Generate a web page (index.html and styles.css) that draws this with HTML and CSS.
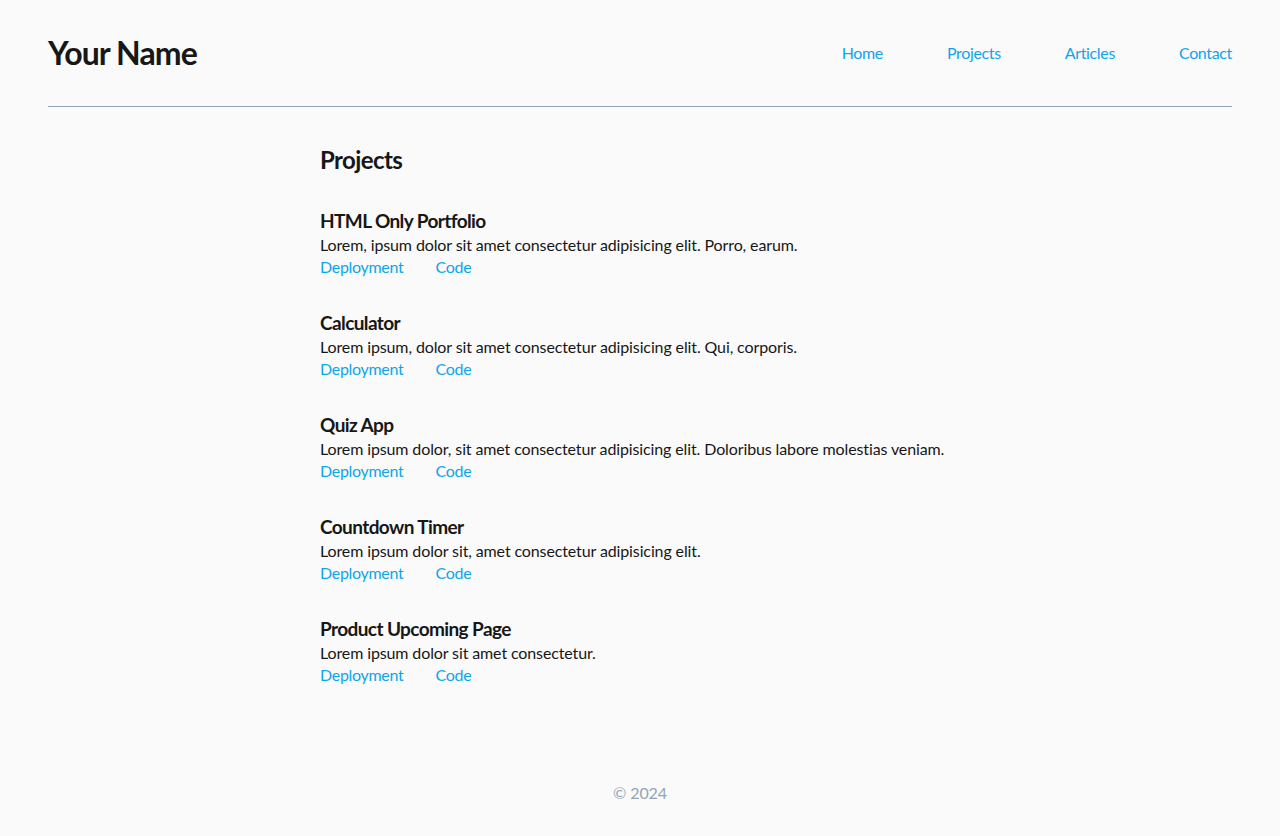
FILE: index.html
```html
<!DOCTYPE html>
<html lang="en">
<head>
<meta charset="utf-8">
<title>Your Name</title>
<link rel="stylesheet" href="styles.css">
</head>
<body>
<header class="site-header">
  <h1 class="logo">Your Name</h1>
  <nav class="nav">
    <a href="#">Home</a>
    <a href="#">Projects</a>
    <a href="#">Articles</a>
    <a href="#">Contact</a>
  </nav>
</header>
<main class="main">
  <h2 class="page-title">Projects</h2>
  <section class="project">
    <h3 class="project-title">HTML Only Portfolio</h3>
    <p class="project-desc">Lorem, ipsum dolor sit amet consectetur adipisicing elit. Porro, earum.</p>
    <div class="project-links"><a href="#">Deployment</a><a href="#">Code</a></div>
  </section>
  <section class="project">
    <h3 class="project-title">Calculator</h3>
    <p class="project-desc">Lorem ipsum, dolor sit amet consectetur adipisicing elit. Qui, corporis.</p>
    <div class="project-links"><a href="#">Deployment</a><a href="#">Code</a></div>
  </section>
  <section class="project">
    <h3 class="project-title">Quiz App</h3>
    <p class="project-desc">Lorem ipsum dolor, sit amet consectetur adipisicing elit. Doloribus labore molestias veniam.</p>
    <div class="project-links"><a href="#">Deployment</a><a href="#">Code</a></div>
  </section>
  <section class="project">
    <h3 class="project-title">Countdown Timer</h3>
    <p class="project-desc">Lorem ipsum dolor sit, amet consectetur adipisicing elit.</p>
    <div class="project-links"><a href="#">Deployment</a><a href="#">Code</a></div>
  </section>
  <section class="project">
    <h3 class="project-title">Product Upcoming Page</h3>
    <p class="project-desc">Lorem ipsum dolor sit amet consectetur.</p>
    <div class="project-links"><a href="#">Deployment</a><a href="#">Code</a></div>
  </section>
</main>
<footer class="footer">© 2024</footer>
</body>
</html>
```
FILE: styles.css
```css
* { box-sizing: border-box; }
html, body { margin: 0; padding: 0; }
body {
  background: #fafafa;
  color: #171717;
  font-family: Lato, "Noto Sans", sans-serif;
  font-size: 16px;
  letter-spacing: -0.12px;
  min-height: 100vh;
  display: flex;
  flex-direction: column;
}
a { color: #0ea5e9; text-decoration: none; }
.site-header {
  margin: 0 48px;
  padding: 32px 0;
  display: flex;
  justify-content: space-between;
  align-items: center;
  border-bottom: 1px solid #94a3b8;
}
.logo {
  margin: 0;
  font-size: 32px;
  line-height: 42px;
  font-weight: 700;
  letter-spacing: -0.9px;
}
.nav {
  display: flex;
  gap: 64px;
  line-height: 22px;
  letter-spacing: -0.35px;
}
.main {
  flex: 1;
  width: 640px;
  margin: 0 auto;
  padding-top: 38px;
}
.page-title {
  margin: 0 0 34px;
  font-size: 24px;
  line-height: 30px;
  font-weight: 700;
  letter-spacing: -0.6px;
}
.project { margin-bottom: 33px; }
.project-title {
  margin: 0;
  font-size: 19px;
  line-height: 24px;
  font-weight: 700;
  letter-spacing: -0.6px;
}
.project-desc {
  margin: 1px 0 0;
  line-height: 22px;
}
.project-links {
  display: flex;
  gap: 32px;
  line-height: 22px;
  letter-spacing: -0.3px;
}
.footer {
  text-align: center;
  color: #94a3b8;
  line-height: 22px;
  padding-bottom: 32px;
}
```
